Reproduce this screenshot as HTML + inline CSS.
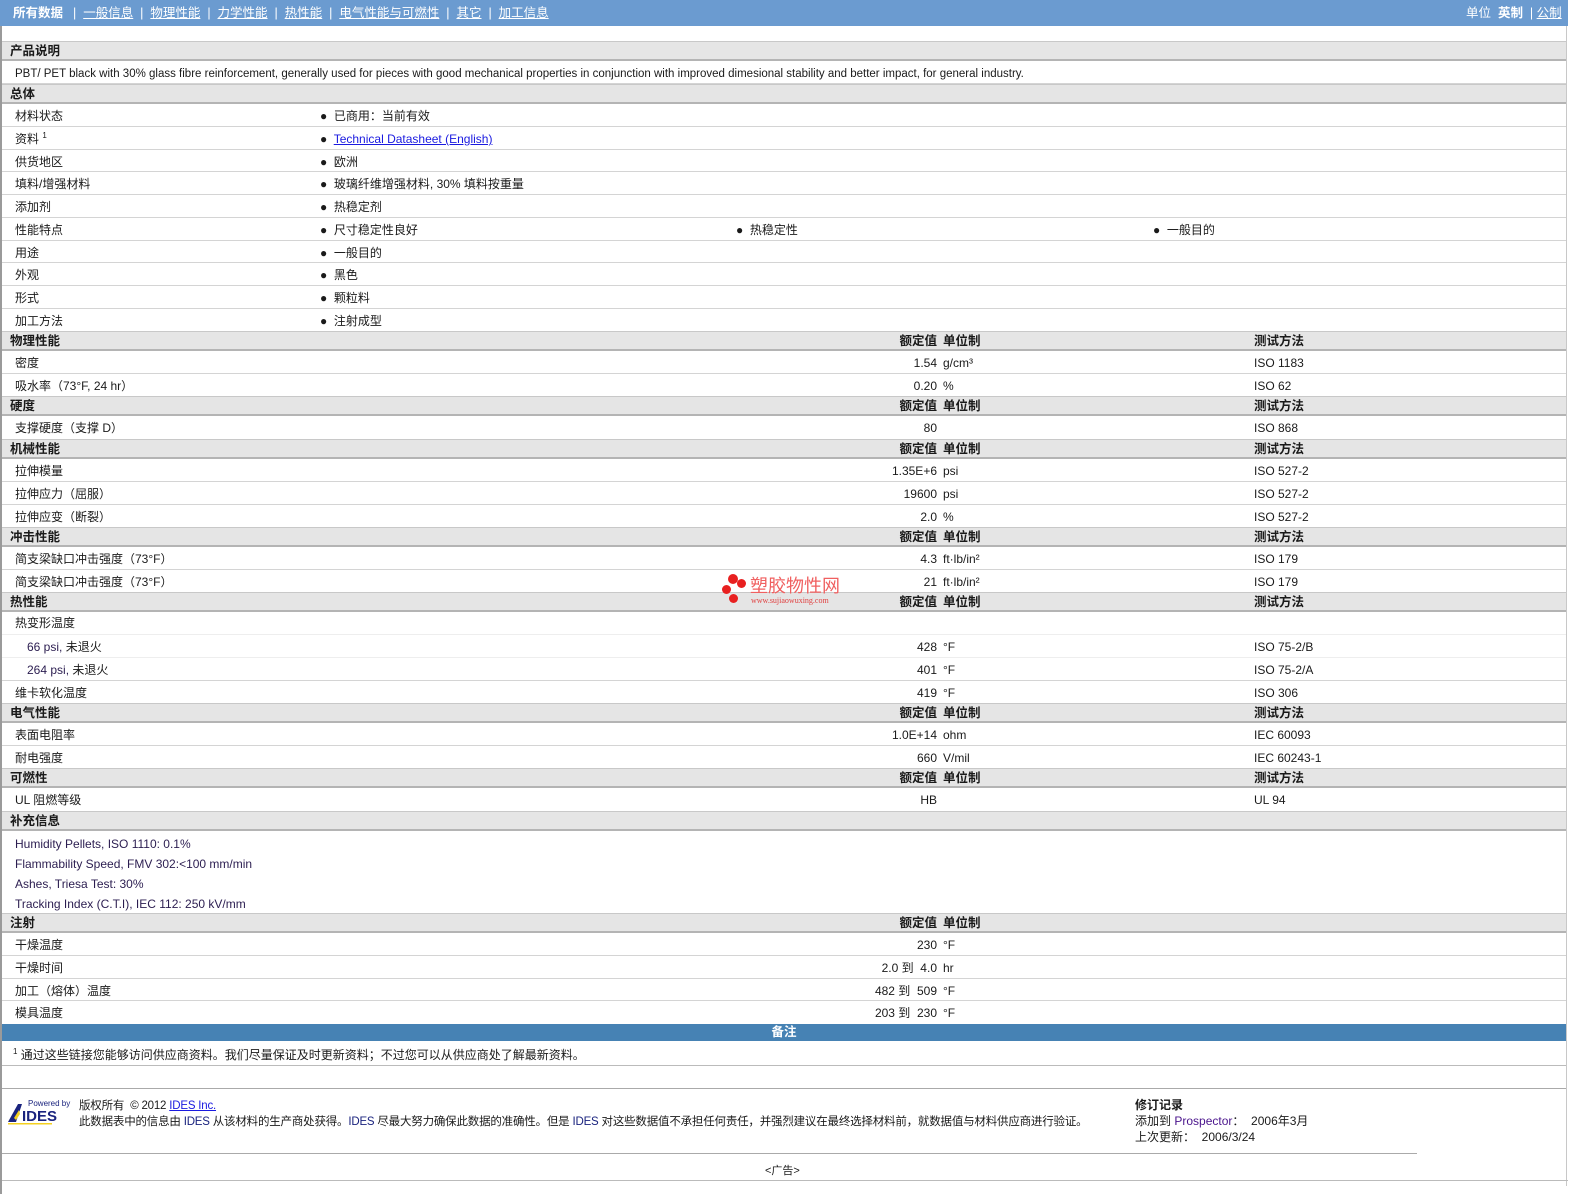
<!DOCTYPE html>
<html><head><meta charset="utf-8"><style>
*{margin:0;padding:0;box-sizing:border-box}
body{width:1584px;height:1194px;background:#fff;font-family:"Liberation Sans","Noto Sans CJK SC",sans-serif;font-size:12px;line-height:14px;color:#1a1a1a;position:relative;overflow:hidden}
.a{position:absolute;white-space:nowrap}
.nav{position:absolute;left:0;top:0;width:1568px;height:26px;background:#6b9bd0;color:#fff;font-size:12.5px}
.nav span{position:absolute;top:6px}
.nav u{text-decoration:underline}
.band{position:absolute;left:2px;width:1564px;height:20px;background:#e5e5e5;border-top:1px solid #c8c8c8;border-bottom:2px solid #b4b4b4;font-weight:bold;font-size:12.5px}
.band .a{top:2px}
.row{position:absolute;left:2px;width:1564px;border-bottom:1px solid #d4d4d4}
.row .a{top:5px}
.l{left:13px}
.bul{left:318px}
.v{right:629px;text-align:right}
.u{left:941px}
.t{left:1252px}
.hv{right:629px}
.hu{left:941px}
.ht{left:1252px}
.p{color:#2b1d50}
</style></head><body>
<div class="a" style="left:0;top:0;width:2px;height:1194px;background:#9a9a9a"></div>
<div class="a" style="left:1566px;top:26px;width:1px;height:1160px;background:#c8c8c8"></div>
<div class="nav">
<span style="left:13px;font-weight:bold">所有数据</span>
<span style="left:73px">|&nbsp; <u>一般信息</u> &nbsp;| &nbsp;<u>物理性能</u> &nbsp;| &nbsp;<u>力学性能</u> &nbsp;| &nbsp;<u>热性能</u> &nbsp;| &nbsp;<u>电气性能与可燃性</u> &nbsp;| &nbsp;<u>其它</u> &nbsp;| &nbsp;<u>加工信息</u></span>
<span style="left:1466px">单位 &nbsp;<b>英制</b> &nbsp;| <u>公制</u></span>
</div>

<div class="band" style="top:41px"><span class="a l" style="left:8px">产品说明</span></div>
<div class="row" style="top:62px;height:22px"><span class="a" style="left:13px;top:5px;font-size:11.5px" >PBT/ PET black with 30% glass fibre reinforcement, generally used for pieces with good mechanical properties in conjunction with improved dimesional stability and better impact, for general industry.</span></div>
<div class="band" style="top:84px"><span class="a" style="left:8px">总体</span></div>
<div class="row" style="top:104px;height:23px"><span class="a l">材料状态</span><span class="a bul">●&nbsp; 已商用：当前有效</span></div>
<div class="row" style="top:127px;height:23px"><span class="a l" style="top:5px">资料 <sup style="font-size:8px;line-height:0">1</sup></span><span class="a bul">●&nbsp; <u style="color:#1a1ae0">Technical Datasheet (English)</u></span></div>
<div class="row" style="top:150px;height:22px"><span class="a l">供货地区</span><span class="a bul">●&nbsp; 欧洲</span></div>
<div class="row" style="top:172px;height:23px"><span class="a l">填料/增强材料</span><span class="a bul">●&nbsp; 玻璃纤维增强材料, 30% 填料按重量</span></div>
<div class="row" style="top:195px;height:23px"><span class="a l">添加剂</span><span class="a bul">●&nbsp; 热稳定剂</span></div>
<div class="row" style="top:218px;height:23px"><span class="a l">性能特点</span><span class="a bul">●&nbsp; 尺寸稳定性良好</span><span class="a" style="left:734px">●&nbsp; 热稳定性</span><span class="a" style="left:1151px">●&nbsp; 一般目的</span></div>
<div class="row" style="top:241px;height:22px"><span class="a l">用途</span><span class="a bul">●&nbsp; 一般目的</span></div>
<div class="row" style="top:263px;height:23px"><span class="a l">外观</span><span class="a bul">●&nbsp; 黑色</span></div>
<div class="row" style="top:286px;height:23px"><span class="a l">形式</span><span class="a bul">●&nbsp; 颗粒料</span></div>
<div class="row" style="top:309px;height:22px;border:0"><span class="a l">加工方法</span><span class="a bul">●&nbsp; 注射成型</span></div>

<div class="band" style="top:331px"><span class="a" style="left:8px">物理性能</span><span class="a hv">额定值</span><span class="a hu">单位制</span><span class="a ht">测试方法</span></div>
<div class="row" style="top:351px;height:23px"><span class="a l">密度</span><span class="a v">1.54</span><span class="a u">g/cm³</span><span class="a t">ISO 1183</span></div>
<div class="row" style="top:374px;height:22px;border:0"><span class="a l">吸水率（73°F, 24 hr）</span><span class="a v">0.20</span><span class="a u">%</span><span class="a t">ISO 62</span></div>
<div class="band" style="top:396px"><span class="a" style="left:8px">硬度</span><span class="a hv">额定值</span><span class="a hu">单位制</span><span class="a ht">测试方法</span></div>
<div class="row" style="top:416px;height:23px;border:0"><span class="a l">支撑硬度（支撑 D）</span><span class="a v">80</span><span class="a t">ISO 868</span></div>
<div class="band" style="top:439px"><span class="a" style="left:8px">机械性能</span><span class="a hv">额定值</span><span class="a hu">单位制</span><span class="a ht">测试方法</span></div>
<div class="row" style="top:459px;height:23px"><span class="a l">拉伸模量</span><span class="a v">1.35E+6</span><span class="a u">psi</span><span class="a t">ISO 527-2</span></div>
<div class="row" style="top:482px;height:23px"><span class="a l">拉伸应力（屈服）</span><span class="a v">19600</span><span class="a u">psi</span><span class="a t">ISO 527-2</span></div>
<div class="row" style="top:505px;height:22px;border:0"><span class="a l">拉伸应变（断裂）</span><span class="a v">2.0</span><span class="a u">%</span><span class="a t">ISO 527-2</span></div>
<div class="band" style="top:527px"><span class="a" style="left:8px">冲击性能</span><span class="a hv">额定值</span><span class="a hu">单位制</span><span class="a ht">测试方法</span></div>
<div class="row" style="top:547px;height:23px"><span class="a l">简支梁缺口冲击强度（73°F）</span><span class="a v">4.3</span><span class="a u">ft·lb/in²</span><span class="a t">ISO 179</span></div>
<div class="row" style="top:570px;height:22px;border:0"><span class="a l">简支梁缺口冲击强度（73°F）</span><span class="a v">21</span><span class="a u">ft·lb/in²</span><span class="a t">ISO 179</span></div>
<div class="band" style="top:592px"><span class="a" style="left:8px">热性能</span><span class="a hv">额定值</span><span class="a hu">单位制</span><span class="a ht">测试方法</span></div>
<div class="row" style="top:612px;height:23px;border-color:#eee"><span class="a l" style="top:4px">热变形温度</span></div>
<div class="row" style="top:635px;height:23px;border-color:#eee"><span class="a" style="left:25px;top:5px"><span class="p">66 psi,</span> 未退火</span><span class="a v">428</span><span class="a u">°F</span><span class="a t">ISO 75-2/B</span></div>
<div class="row" style="top:658px;height:23px"><span class="a" style="left:25px;top:5px"><span class="p">264 psi,</span> 未退火</span><span class="a v">401</span><span class="a u">°F</span><span class="a t">ISO 75-2/A</span></div>
<div class="row" style="top:681px;height:22px;border:0"><span class="a l">维卡软化温度</span><span class="a v">419</span><span class="a u">°F</span><span class="a t">ISO 306</span></div>
<div class="band" style="top:703px"><span class="a" style="left:8px">电气性能</span><span class="a hv">额定值</span><span class="a hu">单位制</span><span class="a ht">测试方法</span></div>
<div class="row" style="top:723px;height:23px"><span class="a l">表面电阻率</span><span class="a v">1.0E+14</span><span class="a u">ohm</span><span class="a t">IEC 60093</span></div>
<div class="row" style="top:746px;height:22px;border:0"><span class="a l">耐电强度</span><span class="a v">660</span><span class="a u">V/mil</span><span class="a t">IEC 60243-1</span></div>
<div class="band" style="top:768px"><span class="a" style="left:8px">可燃性</span><span class="a hv">额定值</span><span class="a hu">单位制</span><span class="a ht">测试方法</span></div>
<div class="row" style="top:788px;height:23px;border:0"><span class="a l">UL 阻燃等级</span><span class="a v">HB</span><span class="a t">UL 94</span></div>
<div class="band" style="top:811px"><span class="a" style="left:8px">补充信息</span></div>
<div class="a p" style="left:15px;top:834px;line-height:20px;font-size:12px">Humidity Pellets, ISO 1110: 0.1%<br>Flammability Speed, FMV 302:&lt;100 mm/min<br>Ashes, Triesa Test: 30%<br>Tracking Index (C.T.I), IEC 112: 250 kV/mm</div>
<div class="band" style="top:913px"><span class="a" style="left:8px">注射</span><span class="a hv">额定值</span><span class="a hu">单位制</span></div>
<div class="row" style="top:933px;height:23px"><span class="a l">干燥温度</span><span class="a v">230</span><span class="a u">°F</span></div>
<div class="row" style="top:956px;height:23px"><span class="a l">干燥时间</span><span class="a v">2.0 到 &nbsp;4.0</span><span class="a u">hr</span></div>
<div class="row" style="top:979px;height:22px"><span class="a l">加工（熔体）温度</span><span class="a v">482 到 &nbsp;509</span><span class="a u">°F</span></div>
<div class="row" style="top:1001px;height:23px;border:0"><span class="a l">模具温度</span><span class="a v">203 到 &nbsp;230</span><span class="a u">°F</span></div>
<div class="a" style="left:2px;top:1024px;width:1564px;height:17px;background:#4682b4;color:#fff;font-weight:bold;text-align:center;font-size:12.5px;line-height:17px">备注</div>
<div class="a" style="left:13px;top:1048px"><sup style="font-size:8px;line-height:0">1</sup> 通过这些链接您能够访问供应商资料。我们尽量保证及时更新资料；不过您可以从供应商处了解最新资料。</div>
<div class="a" style="left:2px;top:1065px;width:1564px;height:1px;background:#bbb"></div>
<div class="a" style="left:2px;top:1088px;width:1564px;height:1px;background:#aaa"></div>
<svg class="a" style="left:6px;top:1098px" width="66" height="28" viewBox="0 0 66 28">
<text x="22" y="8" font-family="Liberation Sans" font-size="8" fill="#1a237e">Powered by</text>
<polygon points="2,24 12,6 16,6 10,24" fill="#1a237e"/>
<polygon points="8,20 13,12 14,16 10,22" fill="#f4d020"/>
<text x="16" y="23" font-family="Liberation Sans" font-weight="bold" font-size="15" fill="#1a237e">IDES</text>
<rect x="2" y="25" width="44" height="1.5" fill="#f4d020"/>
</svg>
<div class="a" style="left:79px;top:1098px;line-height:16px;font-size:11.5px;letter-spacing:-0.2px">版权所有 &nbsp;© 2012 <u style="color:#1a1ae0">IDES Inc.</u><br>此数据表中的信息由 <span style="color:#1a237e">IDES</span> 从该材料的生产商处获得。<span style="color:#1a237e">IDES</span> 尽最大努力确保此数据的准确性。但是 <span style="color:#1a237e">IDES</span> 对这些数据值不承担任何责任，并强烈建议在最终选择材料前，就数据值与材料供应商进行验证。</div>
<div class="a" style="left:1135px;top:1097px;line-height:16px"><b>修订记录</b><br>添加到 <span style="color:#4a148c">Prospector</span>： &nbsp;2006年3月<br>上次更新： &nbsp;2006/3/24</div>
<div class="a" style="left:2px;top:1153px;width:1415px;height:1px;background:#aaa"></div>
<div class="a" style="left:765px;top:1164px;font-size:11px">&lt;广告&gt;</div>
<div class="a" style="left:2px;top:1180px;width:1566px;height:1px;background:#bbb"></div>
<div class="a" style="left:722px;top:574px;width:26px;height:32px">
<div class="a" style="left:6px;top:0;width:10px;height:10px;border-radius:50%;background:#e82020"></div>
<div class="a" style="left:15px;top:5px;width:9px;height:9px;border-radius:50%;background:#e82020"></div>
<div class="a" style="left:0;top:11px;width:9px;height:9px;border-radius:50%;background:#e82020"></div>
<div class="a" style="left:7px;top:20px;width:9px;height:9px;border-radius:50%;background:#e82020"></div>
</div>
<div class="a" style="left:750px;top:577px;color:#f06060;font-size:18px;line-height:18px">塑胶物性网</div>
<div class="a" style="left:751px;top:596px;color:#e04040;font-size:8px;line-height:9px;font-family:'Liberation Serif',serif">www.sujiaowuxing.com</div>
</body></html>
